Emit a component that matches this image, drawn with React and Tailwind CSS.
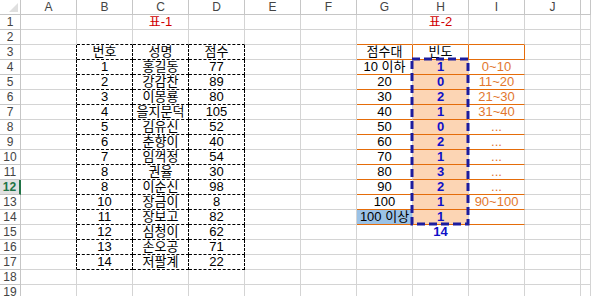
const COLS = ['A', 'B', 'C', 'D', 'E', 'F', 'G', 'H', 'I', 'J', 'K'];
const ROWS = Array.from({ length: 19 }, (_, i) => i + 1);

const table1 = [
  ['번호', '성명', '점수'],
  ['1', '홍길동', '77'],
  ['2', '강감찬', '89'],
  ['3', '이몽룡', '80'],
  ['4', '을지문덕', '105'],
  ['5', '김유신', '52'],
  ['6', '춘향이', '40'],
  ['7', '임꺽정', '54'],
  ['8', '권율', '30'],
  ['8', '이순신', '98'],
  ['10', '장금이', '8'],
  ['11', '장보고', '82'],
  ['12', '심청이', '62'],
  ['13', '손오공', '71'],
  ['14', '저팔계', '22'],
];

const table2 = [
  ['10 이하', '1', '0~10'],
  ['20', '0', '11~20'],
  ['30', '2', '21~30'],
  ['40', '1', '31~40'],
  ['50', '0', '...'],
  ['60', '2', '...'],
  ['70', '1', '...'],
  ['80', '3', '...'],
  ['90', '2', '...'],
  ['100', '1', '90~100'],
  ['100 이상', '1', ''],
];

function content(r, c) {
  if (r === 1 && c === 'C') return '표-1';
  if (r === 1 && c === 'H') return '표-2';
  if (r >= 3 && r <= 17 && 'BCD'.includes(c)) return table1[r - 3]['BCD'.indexOf(c)];
  if (r === 3 && c === 'G') return '점수대';
  if (r === 3 && c === 'H') return '빈도';
  if (r >= 4 && r <= 14 && 'GHI'.includes(c)) return table2[r - 4]['GHI'.indexOf(c)];
  if (r === 15 && c === 'H') return '14';
  return '';
}

function cellClass(r, c) {
  const cls = [];
  const t1 = 'BCD'.includes(c) && r >= 3 && r <= 17;
  const t2 = 'GHI'.includes(c);

  if (t1) cls.push('border-black border-dashed');
  if (c === 'A' && r >= 3 && r <= 17) cls.push('border-r-black [border-right-style:dashed]');
  if (r === 2 && 'BCD'.includes(c)) cls.push('border-b-black [border-bottom-style:dashed]');

  if (t2 && r >= 2 && r <= 14) cls.push('border-b-[#e46c0a]');
  if (r === 3 && t2) cls.push('border-r-[#e46c0a]');
  if (c === 'G' && r === 3) cls.push('border-r-[#e46c0a]');

  if (c === 'H' && r >= 4 && r <= 14) cls.push('bg-[#fcd5b4] font-bold text-[#1010c8]');
  if (c === 'H' && r === 15) cls.push('font-bold text-[#1010c8]');
  if (c === 'G' && r === 14) cls.push('bg-[#9bc2e6]');
  if (c === 'I' && r >= 4) cls.push('text-[#e2772e]');
  if (r === 1) cls.push('text-[#d00000]');
  return cls.join(' ');
}

export default function App() {
  return (
    <div className="h-[296px] w-[591px] overflow-hidden bg-white">
      <div className="relative grid grid-cols-[21px_repeat(10,56px)_10px] grid-rows-[15px_repeat(19,15px)] font-['Liberation_Sans_Narrow','Liberation_Sans','Noto_Sans_CJK_KR',sans-serif] text-[13px] leading-none text-black">
        {/* corner */}
        <div className="relative border-r border-b border-[#c6c6c6] bg-white">
          <svg className="absolute bottom-[2px] right-[2px]" width="9" height="9" viewBox="0 0 9 9">
            <path d="M9 0 L9 9 L0 9 Z" fill="#dfdfdf" />
          </svg>
        </div>
        {COLS.map((c) => (
          <div
            key={c}
            className="flex items-center justify-center border-r border-b border-[#c6c6c6] bg-white font-['Liberation_Sans','Noto_Sans_CJK_KR',sans-serif] text-[12px] text-[#444]"
          >
            {c === 'K' ? '' : c}
          </div>
        ))}

        {ROWS.map((r) => [
          <div
            key={`h${r}`}
            className={
              r === 12
                ? "flex items-center justify-center border-b border-r-2 border-b-[#c6c6c6] border-r-[#217346] bg-[#e1e1e1] font-['Liberation_Sans',sans-serif] text-[12px] font-bold text-[#217346]"
                : "flex items-center justify-center border-r border-b border-[#c6c6c6] bg-white font-['Liberation_Sans',sans-serif] text-[12px] text-[#444]"
            }
          >
            {r}
          </div>,
          ...COLS.map((c) => (
            <div
              key={`${c}${r}`}
              className={`flex items-end justify-center overflow-hidden whitespace-nowrap border-r border-b border-[#d4d4d4] pb-[1px] ${cellClass(r, c)}`}
            >
              {content(r, c)}
            </div>
          )),
        ])}

        {/* copy marquee around H4:H14 */}
        <svg className="pointer-events-none absolute left-[409px] top-[56px]" width="63" height="172">
          <rect x="3" y="3" width="56" height="165" fill="none" stroke="#1c1c9e" strokeWidth="3" strokeDasharray="8 4" />
        </svg>
      </div>
    </div>
  );
}
